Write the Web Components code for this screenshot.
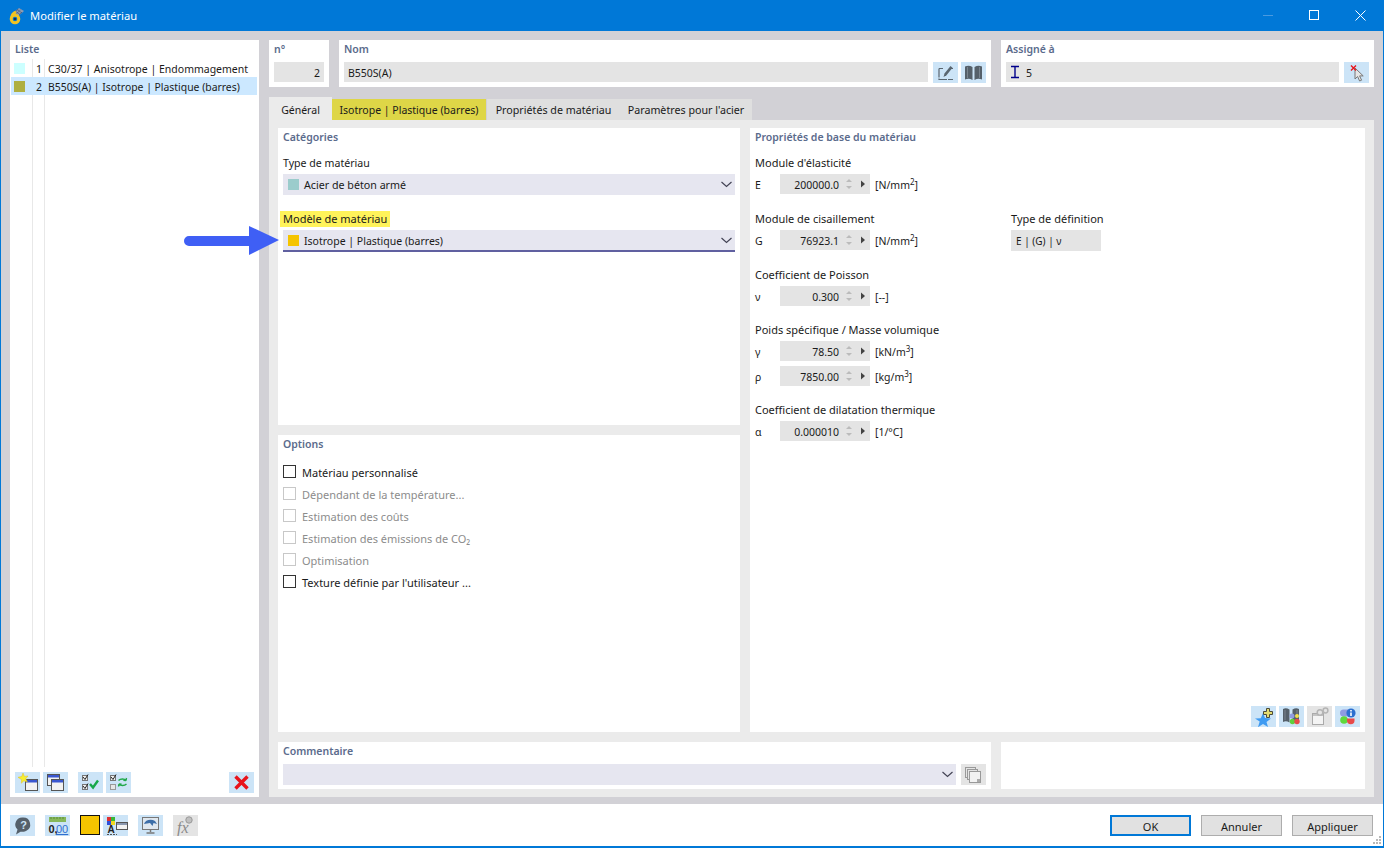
<!DOCTYPE html>
<html lang="fr">
<head>
<title>Modifier le matériau</title>
<meta charset="utf-8">
<style>
    html, body { margin: 0; padding: 0; background: #fff; }
    body { font: 10.5px "Noto Sans", sans-serif; color: #1a1a1a; overflow: hidden; }
</style>
</head>
<body>

<mat-dialog>
    <mat-titlebar slot="title">Modifier le matériau</mat-titlebar>

    <mat-list slot="list" heading="Liste">
        <mat-list-row color="#ccffff" num="1">C30/37 | Anisotrope | Endommagement</mat-list-row>
        <mat-list-row color="#afaf40" num="2" selected style="font-size:10.4px">B550S(A) | Isotrope | Plastique (barres)</mat-list-row>
        <mat-btn slot="tools" icon="newwin"></mat-btn>
        <mat-btn slot="tools" icon="copywin"></mat-btn>
        <mat-btn slot="tools" icon="checks" style="margin-left:7px"></mat-btn>
        <mat-btn slot="tools" icon="swap"></mat-btn>
        <mat-btn slot="tools" icon="del" style="margin-left:auto"></mat-btn>
    </mat-list>

    <mat-box slot="no" heading="n°" style="width:60px">
        <mat-field align="right" style="flex:1">2</mat-field>
    </mat-box>
    <mat-box slot="name" heading="Nom" style="flex:1">
        <mat-field style="flex:1">B550S(A)</mat-field>
        <mat-btn icon="edit"></mat-btn>
        <mat-btn icon="book" style="margin-left:-2px"></mat-btn>
    </mat-box>
    <mat-box slot="assigned" heading="Assigné à" style="width:373px">
        <mat-field style="flex:1"><mat-icon name="ibeam" style="margin:0 6px 2px 0"></mat-icon>5</mat-field>
        <mat-btn icon="pick"></mat-btn>
    </mat-box>

    <mat-tabs slot="tabs">
        <mat-tab active style="width:63px">Général</mat-tab>
        <mat-tab yellow style="width:154px">Isotrope | Plastique (barres)</mat-tab>
        <mat-tab style="width:133px;margin-left:1px;font-size:10.7px">Propriétés de matériau</mat-tab>
        <mat-tab style="width:132px;font-size:10.7px">Paramètres pour l'acier</mat-tab>
    </mat-tabs>

    <mat-panel slot="cat" heading="Catégories">
        <mat-label style="margin-top:10px;font-size:10.6px">Type de matériau</mat-label>
        <mat-combo color="#9bcccc" style="font-size:10.7px">Acier de béton armé</mat-combo>
        <mat-label mark style="margin-top:16px">Modèle de matériau</mat-label>
        <mat-combo color="#f5c400" focus>Isotrope | Plastique (barres)</mat-combo>
    </mat-panel>

    <mat-panel slot="opt" heading="Options">
        <div style="height:8px"></div>
        <mat-check>Matériau personnalisé</mat-check>
        <mat-check disabled>Dépendant de la température...</mat-check>
        <mat-check disabled>Estimation des coûts</mat-check>
        <mat-check disabled>Estimation des émissions de CO₂</mat-check>
        <mat-check disabled>Optimisation</mat-check>
        <mat-check>Texture définie par l'utilisateur ...</mat-check>
    </mat-panel>

    <mat-panel slot="props" heading="Propriétés de base du matériau">
        <mat-props>
            <mat-label style="margin-top:10px">Module d'élasticité</mat-label>
            <mat-spin sym="E" value="200000.0">[N/mm<sup>2</sup>]</mat-spin>
            <mat-label style="margin-top:17px">Module de cisaillement</mat-label>
            <mat-spin sym="G" value="76923.1">[N/mm<sup>2</sup>]</mat-spin>
            <mat-label style="margin-top:17px">Coefficient de Poisson</mat-label>
            <mat-spin sym="ν" value="0.300">[--]</mat-spin>
            <mat-label style="margin-top:16px">Poids spécifique / Masse volumique</mat-label>
            <mat-spin sym="γ" value="78.50">[kN/m<sup>3</sup>]</mat-spin>
            <mat-spin sym="ρ" value="7850.00" style="margin-top:5px">[kg/m<sup>3</sup>]</mat-spin>
            <mat-label style="margin-top:16px">Coefficient de dilatation thermique</mat-label>
            <mat-spin sym="α" value="0.000010">[1/°C]</mat-spin>
            <mat-def slot="def" heading="Type de définition">E | (G) | ν</mat-def>
        </mat-props>
        <mat-toolrow>
            <mat-btn icon="starplus"></mat-btn>
            <mat-btn icon="bookcolor"></mat-btn>
            <mat-btn icon="gearwin" disabled></mat-btn>
            <mat-btn icon="info"></mat-btn>
        </mat-toolrow>
    </mat-panel>

    <mat-panel slot="comment" heading="Commentaire">
        <div style="display:flex;gap:5px;margin-top:5px">
            <mat-combo style="flex:1;margin:0"></mat-combo>
            <mat-btn icon="copy" disabled></mat-btn>
        </div>
    </mat-panel>
    <mat-panel slot="blank"></mat-panel>

    <mat-btn slot="foot" icon="help"></mat-btn>
    <mat-btn slot="foot" icon="ruler" style="margin-left:10px"></mat-btn>
    <mat-swatch slot="foot" style="margin-left:10px"></mat-swatch>
    <mat-btn slot="foot" icon="colors" style="margin-left:3px"></mat-btn>
    <mat-btn slot="foot" icon="monitor" style="margin-left:10px"></mat-btn>
    <mat-btn slot="foot" icon="fx" disabled style="margin-left:10px"></mat-btn>

    <mat-action slot="actions" primary>OK</mat-action>
    <mat-action slot="actions">Annuler</mat-action>
    <mat-action slot="actions">Appliquer</mat-action>

    <mat-arrow slot="over"></mat-arrow>
</mat-dialog>

<script type="module">
    const ICONS = {
        newwin: `<rect x="10.500" y="7.500" width="12" height="11" fill="#f2f2f2" stroke="#555"/><rect x="11" y="8" width="11" height="2.500" fill="#3a57d0"/><path d="M8 1l1.400 3.400 3.600-.4-2.300 2.800 1.700 3.200-3.500-1.200-2.600 2.400.2-3.600L3 5.300l3.700-.8z" fill="#f7ee30" stroke="#e0c020" stroke-width=".5"/>`,
        copywin: `<rect x="4.500" y="2.500" width="12" height="11" fill="#f2f2f2" stroke="#555"/><rect x="5" y="3" width="11" height="2.500" fill="#3a57d0"/><rect x="8.500" y="7.500" width="12" height="11" fill="#f2f2f2" stroke="#555"/><rect x="9" y="8" width="11" height="2.500" fill="#3a57d0"/>`,
        checks: `<rect x="4.500" y="3.500" width="5" height="5" fill="#eee" stroke="#777"/><path d="M5 5l2 2.500 3-5" fill="none" stroke="#222"/><rect x="4.500" y="12.500" width="5" height="5" fill="#eee" stroke="#777"/><path d="M5 14l2 2.500 3-5" fill="none" stroke="#222"/><path d="M12 12l3 3.500 5-7" fill="none" stroke="#17a84a" stroke-width="2.400"/>`,
        swap: `<rect x="4.500" y="3.500" width="5" height="5" fill="#eee" stroke="#777"/><path d="M5 5l2 2.500 3-5" fill="none" stroke="#222"/><rect x="4.500" y="12.500" width="5" height="5" fill="#e6e6e6" stroke="#999"/><path d="M12.500 8.500c2-2 6-2 7.500 0M20 8.500l.5-2.500M20 8.500l-2.600-.3" fill="none" stroke="#22a84a" stroke-width="1.400"/><path d="M20.500 12c-2 2-6 2-7.500 0M13 12l-.5 2.500M13 12l2.600.3" fill="none" stroke="#22a84a" stroke-width="1.400"/>`,
        del: `<path d="M6.500 4.500l12 12M18.500 4.500l-12 12" stroke="#e8141c" stroke-width="3.400" fill="none"/>`,
        edit: `<path d="M6 6.500v11h14M6 6.500h4M17 6.500h3" fill="none" stroke="#5a6670" stroke-width="1.200" stroke-dasharray="9 1"/><path d="M10.500 15l1-3.500 6-7.500 2 1.700-6 7.500z" fill="#5a6670"/>`,
        book: `<path d="M4 4.500c2.500-1 5-1 7.500.5v13c-2.500-1.500-5-1.500-7.500-.5zM21 4.500c-2.500-1-5-1-7.500.5v13c2.500-1.500 5-1.500 7.500-.5z" fill="#55606a"/><path d="M6.500 5v11M18.500 5v11" stroke="#8a949e" stroke-width=".7"/>`,
        pick: `<path d="M11 6v11l2.600-2.500 2 4.500 2-.8-2-4.300h3.600z" fill="#e6e6e6" stroke="#777"/><path d="M7 3.500l5 5M12 3.500l-5 5" stroke="#e8141c" stroke-width="1.400"/>`,
        starplus: `<path d="M12 7l2 5 6 .5-4.500 3.500 1.500 5-5-3-5 3.200 1.700-5.600L4 12.500l5.800-.2z" fill="#3f9bf2"/><path d="M15.500 2.500h3v3h3v3h-3v3h-3v-3h-3v-3h3z" fill="#e4dc70" stroke="#4a4a3a"/>`,
        bookcolor: `<path d="M4 3c2-1 4-1 6.500.5v13c-2.500-1.500-4.500-1.500-6.500-.5zM20 3c-2-1-4-1-6.500.5v13c2.500-1.500 4.500-1.500 6.500-.5z" fill="#55606a"/><path d="M6 4v10M18 4v6" stroke="#8a949e" stroke-width=".7"/><circle cx="13" cy="10" r="2.500" fill="#8f9be0"/><circle cx="18" cy="10" r="2" fill="#f2e04a"/><circle cx="13.500" cy="15.500" r="2.700" fill="#5fd03c"/><circle cx="18" cy="15.500" r="2.700" fill="#e84a4a"/>`,
        gearwin: `<rect x="5.500" y="7.500" width="11" height="11" fill="#f4f4f4" stroke="#aaa"/><rect x="6" y="8" width="10" height="2" fill="#c4c4c4"/><circle cx="13" cy="6.500" r="2.800" fill="#e4e4e4" stroke="#b4b4b4" stroke-width="1.500"/><circle cx="18.500" cy="4.500" r="2.400" fill="#e4e4e4" stroke="#b4b4b4" stroke-width="1.500"/>`,
        info: `<path d="M5 7a3.500 3.500 0 0 1 3.500-3.500h5v7H8.500A3.500 3.500 0 0 1 5 7z" fill="#8f9be0"/><circle cx="9" cy="14" r="3.800" fill="#5fd83c"/><path d="M12 12.500h7.500v2a3.700 3.700 0 0 1-7.500 0z" fill="#e84a4a"/><circle cx="16" cy="7" r="4.600" fill="#2b6fd0"/><path d="M16 4v1.400M16 6.500V10" stroke="#fff" stroke-width="1.600"/>`,
        copy: `<rect x="4.500" y="3.500" width="10" height="10" fill="#e4e4e4" stroke="#999"/><rect x="6.500" y="5.500" width="10" height="10" fill="#e4e4e4" stroke="#999"/><rect x="8.500" y="7.500" width="11" height="11" fill="#f2f2f2" stroke="#999"/><rect x="16" y="15" width="3" height="3" fill="#aaa"/>`,
        help: `<path d="M13 2.500a7 7 0 0 1 3 13.400c-2 1-4 1-5.500.8L6 19.500l1.500-5a7 7 0 0 1 5.500-12z" fill="#55606a"/><text x="13.500" y="13.500" text-anchor="middle" font-family="Liberation Sans" font-size="11" font-weight="700" fill="#cce4f7">?</text>`,
        ruler: `<rect x="4" y="2" width="17" height="5" fill="#86b85a"/><path d="M6 2v2M9 2v2M12 2v2M15 2v2M18 2v2" stroke="#5a8a3a"/><text x="3.500" y="18" font-family="Liberation Sans" font-size="11" font-weight="700" fill="#222">0,</text><text x="11" y="18" font-family="Liberation Sans" font-size="11" fill="#2f6fd0" text-decoration="underline">00</text>`,
        colors: `<rect x="4" y="2" width="4" height="4" fill="#e03030"/><rect x="8" y="2" width="4" height="4" fill="#38b838"/><rect x="4" y="6" width="4" height="4" fill="#3050d8"/><rect x="8" y="6" width="4" height="4" fill="#f0d820"/><text x="4.500" y="18" font-family="Liberation Sans" font-size="10" font-weight="700" fill="#222">A</text><rect x="13.500" y="7.500" width="11" height="7" fill="#f2f2f2" stroke="#555"/><rect x="14" y="8" width="10" height="2" fill="#8a98b0"/><path d="M4 19.500h10" stroke="#555" stroke-dasharray="2 1"/>`,
        monitor: `<rect x="4.500" y="2.500" width="16" height="12" fill="#dfe7ef" stroke="#777"/><path d="M6 9c1-4 7-5.500 11-3l2 3-3.500-1-1 3-2.500-3z" fill="#3d6ea8"/><path d="M12.500 15v2M8.500 18h8" stroke="#777" stroke-width="1.500"/>`,
        fx: `<circle cx="16" cy="5" r="3.200" fill="#c0c0c0" stroke="#999"/><text x="4" y="18" font-family="Liberation Serif" font-style="italic" font-size="16" fill="#8a8a8a">fx</text>`,
        ibeam: `<path d="M1 1.500h8M1 12.500h8M5 1.500v11" stroke="#00008b" stroke-width="1.400" fill="none"/>`
    }

    // small helper, every element below is just a style plus a bit of markup
    const define = (name, css, html) => {
        customElements.define(name, class extends HTMLElement {
            constructor() {
                super()
                this.attachShadow({mode: 'open'})
            }
            connectedCallback() {
                const a = n => this.getAttribute(n) ?? ''
                this.shadowRoot.innerHTML = `<style>${css}</style>${typeof html === 'function' ? html(a) : html}`
            }
        })
    }

    const headingCss = `.h { font-weight: 600; color: #5b6b8c; line-height: 16px; font-size: 10.5px; }`

    define('mat-icon', `:host { display: inline-flex; } svg { display: block; }`,
        a => `<svg width="10" height="14" viewBox="0 0 10 14">${ICONS[a('name')]}</svg>`)

    define('mat-btn', `
        :host { display: block; width: 25px; height: 21px; background: #cce4f7; flex: none; }
        :host([disabled]) { background: #e4e4e4; }
        svg { display: block; }`,
        a => `<svg width="25" height="21" viewBox="0 0 25 21">${ICONS[a('icon')]}</svg>`)

    define('mat-swatch', `:host { display: block; width: 18px; height: 18px; background: #f5c400; border: 1.500px solid #111; flex: none; }`, '')

    define('mat-titlebar', `
        :host { display: flex; align-items: center; height: 31px; background: #0078d7; color: #fff; font-size: 11.2px; }
        .logo { margin-left: 7px; margin-right: 6px; }
        .t { flex: 1; margin-top: -1px; }
        .b { width: 46px; display: flex; justify-content: center; }
        svg { display: block; }`,
        `<svg class="logo" width="16" height="18" viewBox="0 0 16 18">
            <path d="M5 5.500l6-4.500 5 3-5.500 5z" fill="#8e9db4"/>
            <path d="M7 4l5 3.500M9 2.500l5 3.500M11 8l3-3M8.500 6.500l4-3.500M6.500 5l4-3" stroke="#44536e" stroke-width=".6"/>
            <circle cx="7" cy="12" r="3.800" fill="none" stroke="#f2c321" stroke-width="3"/>
            <path d="M3.500 11c0-3 1.500-5 4.500-6" fill="none" stroke="#f2c321" stroke-width="2.500"/>
            <circle cx="7" cy="12" r="1.300" fill="#20304a"/>
        </svg>
        <span class="t"><slot></slot></span>
        <span class="b"><svg width="11" height="11"><path d="M0 5.500h10" stroke="#4a9ae0"/></svg></span>
        <span class="b"><svg width="11" height="11"><rect x=".5" y=".5" width="9" height="9" fill="none" stroke="#fff"/></svg></span>
        <span class="b"><svg width="11" height="11"><path d="M.5.500l10 10M10.500.500l-10 10" stroke="#fff"/></svg></span>`)

    define('mat-list', `
        :host { display: flex; flex-direction: column; width: 249px; background: #fff; position: relative; }
        ${headingCss}
        .h { padding: 1px 0 2px 5px; }
        .rows { flex: 1; position: relative; padding: 0 2px 0 1px; }
        .rows::before { content: ""; position: absolute; left: 22px; width: 1px; top: 0; bottom: 0; background: #e8e8e8; }
        .rows::after { content: ""; position: absolute; left: 34px; width: 1px; top: 0; bottom: 0; background: #e8e8e8; }
        .tools { display: flex; gap: 3px; padding: 5px 5px 4px; }`,
        a => `<div class="h">${a('heading')}</div>
        <div class="rows"><slot></slot></div>
        <div class="tools"><slot name="tools"></slot></div>`)

    define('mat-list-row', `
        :host { display: flex; align-items: center; height: 18px; position: relative; z-index: 1; white-space: nowrap; }
        :host([selected]) { background: #cce8ff; }
        i { width: 11px; height: 11px; margin-left: 3px; flex: none; }
        b { font-weight: 400; width: 17px; text-align: right; flex: none; padding-top: 2px; }
        span { margin-left: 6px; padding-top: 2px; }`,
        a => `<i style="background:${a('color')}"></i><b>${a('num')}</b><span><slot></slot></span>`)

    define('mat-box', `
        :host { display: block; background: #fff; height: 47px; box-sizing: border-box; padding: 1px 5px 0; flex: none; }
        ${headingCss}
        .h { height: 21px; }
        .row { display: flex; gap: 5px; }`,
        a => `<div class="h">${a('heading')}</div><div class="row"><slot></slot></div>`)

    define('mat-field', `
        :host { display: flex; align-items: center; height: 20px; box-sizing: border-box; background: #e4e4e4; padding: 2px 4px 0; min-width: 0; }
        :host([align=right]) { justify-content: flex-end; }`, `<slot></slot>`)

    define('mat-tabs', `:host { display: flex; align-items: flex-end; height: 23px; margin-top: 10px; }`, `<slot></slot>`)

    define('mat-tab', `
        :host { display: flex; align-items: center; justify-content: center; height: 21px; background: #dfdfdf; box-sizing: border-box; white-space: nowrap; flex: none; }
        :host([active]) { background: #ebebeb; height: 23px; padding-top: 2px; }
        :host([yellow]) { background: #ded647; }`, `<slot></slot>`)

    define('mat-panel', `
        :host { display: flex; flex-direction: column; background: #fff; padding: 1px 5px 5px; box-sizing: border-box; min-height: 0; }
        ${headingCss}`,
        a => `${a('heading') ? `<div class="h">${a('heading')}</div>` : ''}<slot></slot>`)

    define('mat-label', `
        :host { display: flex; height: 16px; align-items: center; font-size: 11px; }
        span { display: block; line-height: 16px; }
        :host([mark]) span { background: #fff35a; margin-left: -3px; padding: 0 3px; }`, `<span><slot></slot></span>`)

    define('mat-combo', `
        :host { display: flex; align-items: center; height: 21px; margin-top: 3px; background: #e6e6f0; box-sizing: border-box; white-space: nowrap; }
        :host([focus]) { height: 22px; border-bottom: 2px solid #6060a0; }
        :host([focus]) span { padding-top: 2px; }
        i { width: 11px; height: 11px; margin: 0 5px 0 5px; flex: none; }
        span { flex: 1; }
        svg { margin-right: 3px; flex: none; }`,
        a => `${a('color') ? `<i style="background:${a('color')}"></i>` : ''}<span><slot></slot></span>
        <svg width="11" height="7"><path d="M.5 1l5 4.500 5-4.500" fill="none" stroke="#445" stroke-width="1.200"/></svg>`)

    define('mat-check', `
        :host { display: flex; align-items: center; height: 22px; white-space: nowrap; font-size: 11px; }
        i { width: 11px; height: 11px; border: 1px solid #333; margin-right: 6px; flex: none; }
        span { padding-top: 2px; }
        :host([disabled]) { color: #8c8c8c; }
        :host([disabled]) i { border-color: #c8c8c8; }`, `<i></i><span><slot></slot></span>`)

    define('mat-props', `
        :host { display: block; flex: 1; position: relative; }
        .d { position: absolute; left: 256px; top: 66px; }`,
        `<slot></slot><div class="d"><slot name="def"></slot></div>`)

    define('mat-spin', `
        :host { display: flex; align-items: center; height: 20px; margin-top: 3px; white-space: nowrap; }
        .s { width: 25px; flex: none; padding-top: 2px; }
        .f { width: 90px; height: 20px; background: #e4e4e4; display: flex; align-items: center; flex: none; }
        .v { width: 59px; text-align: right; padding-top: 2px; }
        svg { margin-left: 6px; display: block; }
        .u { margin-left: 5px; padding-top: 2px; }
        ::slotted(sup) { font-size: 8px; line-height: 0; }`,
        a => `<span class="s">${a('sym')}</span>
        <div class="f"><span class="v">${a('value')}</span>
            <svg width="22" height="14" viewBox="0 0 22 14"><path d="M1 5l3-3 3 3z" fill="#bbb"/><path d="M1 9l3 3 3-3z" fill="#bbb"/><path d="M16 3.500l4 3.500-4 3.500z" fill="#444"/></svg>
        </div>
        <span class="u"><slot></slot></span>`)

    define('mat-def', `
        :host { display: block; white-space: nowrap; }
        .l { line-height: 16px; font-size: 11px; }
        .b { width: 85px; height: 21px; padding-left: 5px; margin-top: 3px; background: #e4e4e4; display: flex; align-items: center; font-size: 10px; }`,
        a => `<div class="l">${a('heading')}</div><div class="b"><slot></slot></div>`)

    define('mat-toolrow', `:host { display: flex; justify-content: flex-end; gap: 3px; }`, `<slot></slot>`)

    define('mat-action', `
        :host { display: flex; align-items: center; justify-content: center; width: 81px; height: 21px; box-sizing: border-box; background: #e1e1e1; border: 1px solid #adadad; font-size: 11px; padding-top: 2px; }
        :host([primary]) { border: 2px solid #0078d7; padding-top: 2px; }`, `<slot></slot>`)

    define('mat-arrow', `
        :host { position: absolute; left: 183px; top: 226px; display: block; }
        svg { display: block; }`,
        `<svg width="95" height="30" viewBox="0 0 95 30"><path d="M5 10h60V0l30 14L65 29V20H5a5 5 0 0 1 0-10z" fill="#3f5ff5"/></svg>`)

    define('mat-dialog', `
        :host { display: flex; flex-direction: column; width: 1384px; height: 848px; box-sizing: border-box; border: solid #0078d7; border-width: 0 1px 2px; position: relative; overflow: hidden; background: #fff; }
        .work { display: flex; gap: 10px; height: 773px; padding: 9px 9px 7px; box-sizing: border-box; background: #d2d1d6; }
        .right { flex: 1; display: flex; flex-direction: column; min-width: 0; }
        .top { display: flex; gap: 10px; }
        .page { flex: 1; background: #ebebeb; padding: 8px 9px 8px; display: grid; grid-template-columns: 462px 251px 10px 364px; grid-template-rows: 297px 297px 47px; gap: 10px 0; min-height: 0; }
        .c1 { grid-column: 1; grid-row: 1; display: grid; }
        .c2 { grid-column: 1; grid-row: 2; display: grid; }
        .c3 { grid-column: 2 / 5; grid-row: 1 / 3; display: grid; margin-left: 10px; }
        .c4 { grid-column: 1 / 3; grid-row: 3; display: grid; }
        .c5 { grid-column: 4; grid-row: 3; display: grid; }
        .foot { display: flex; align-items: center; height: 42px; padding: 0 10px 0 9px; }
        .foot .l { display: flex; align-items: center; }
        .foot .r { margin-left: auto; display: flex; gap: 10px; }
        .grip { position: absolute; right: 1px; bottom: 1px; }`,
        `<slot name="title"></slot>
        <div class="work">
            <slot name="list"></slot>
            <div class="right">
                <div class="top"><slot name="no"></slot><slot name="name"></slot><slot name="assigned"></slot></div>
                <slot name="tabs"></slot>
                <div class="page">
                    <div class="c1"><slot name="cat"></slot></div>
                    <div class="c2"><slot name="opt"></slot></div>
                    <div class="c3"><slot name="props"></slot></div>
                    <div class="c4"><slot name="comment"></slot></div>
                    <div class="c5"><slot name="blank"></slot></div>
                </div>
            </div>
        </div>
        <div class="foot">
            <div class="l"><slot name="foot"></slot></div>
            <div class="r"><slot name="actions"></slot></div>
        </div>
        <svg class="grip" width="9" height="9"><path d="M6 0h2v2H6zM3 3h2v2H3zM6 3h2v2H6zM0 6h2v2H0zM3 6h2v2H3zM6 6h2v2H6z" fill="#b8b8b8"/></svg>
        <slot name="over"></slot>`)
</script>
</body>
</html>
